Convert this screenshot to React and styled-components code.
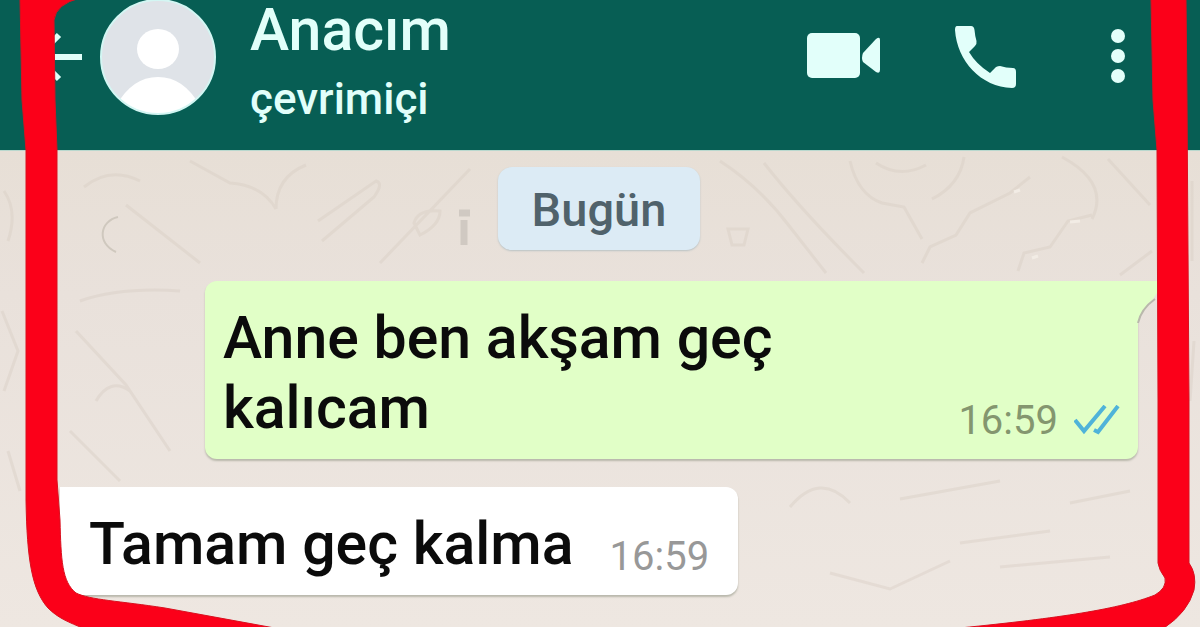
import React from "react";
import styled, { createGlobalStyle } from "styled-components";

const GlobalStyle = createGlobalStyle`
  * { box-sizing: border-box; }
  body {
    margin: 0;
    font-family: Roboto, "Liberation Sans", sans-serif;
    font-weight: 500;
  }
`;

const Screen = styled.div`
  position: relative;
  display: flex;
  flex-direction: column;
  min-height: 100vh;
`;

const Header = styled.header`
  display: flex;
  align-items: flex-start;
  min-height: 150px;
  padding: 0 74px 0 36px;
  background: #075e54;
  color: #e2fffa;
`;

const IconButton = styled.button`
  display: flex;
  align-items: center;
  justify-content: flex-end;
  flex: none;
  width: ${(p) => p.$width}px;
  height: 114px;
  padding: 0;
  border: 0;
  background: none;
  color: inherit;
  cursor: pointer;

  svg { display: block; flex: none; }
`;

const Avatar = styled.svg`
  display: block;
  flex: none;
  width: 116px;
  height: 116px;
  margin-left: 18px;
`;

const Contact = styled.div`
  display: flex;
  flex-direction: column;
  gap: 12px;
  flex: 1;
  min-width: 0;
  margin-left: 34px;
`;

const Name = styled.h1`
  margin: 0;
  font-size: 59px;
  font-weight: 500;
  line-height: 60px;
`;

const Status = styled.p`
  margin: 0;
  font-size: 44px;
  line-height: 54px;
`;

const Actions = styled.div`
  display: flex;
  gap: 74px;
`;

const Chat = styled.main`
  position: relative;
  display: flex;
  flex: 1;
  flex-direction: column;
  padding: 16px 62px 32px 60px;
  border-top: 1px solid #b9d8ce;
  background: linear-gradient(#e7dfd6, #e9e1db 30%, #eee7e1);
`;

const Wallpaper = styled.svg`
  position: absolute;
  inset: 0;
  width: 100%;
  height: 100%;
`;

const DateChip = styled.time`
  position: relative;
  align-self: center;
  padding: 14px 34px 11px;
  border-radius: 14px;
  background: #dcebf5;
  box-shadow: 0 1px 2px #b9c2c4;
  color: #50626b;
  font-size: 47px;
  line-height: 58px;
`;

const Bubble = styled.article`
  position: relative;
  display: flex;
  align-items: flex-end;
  align-self: ${(p) => (p.$sent ? "stretch" : "flex-start")};
  gap: 36px;
  margin: ${(p) => (p.$sent ? "31px 0 0 145px" : "28px 0 0")};
  padding: ${(p) => (p.$sent ? "22px 18px 16px" : "22px 29px 16px")};
  border-radius: ${(p) => (p.$sent ? "12px 0 12px 12px" : "0 12px 12px 12px")};
  background: ${(p) => (p.$sent ? "#e1ffc7" : "#ffffff")};
  box-shadow: 0 2px 2px #b9b8ac;
`;

const Tail = styled.svg`
  position: absolute;
  top: 0;
  left: 100%;
  width: 28px;
  height: 42px;
  margin-left: -1px;
`;

const Message = styled.p`
  flex: 1;
  margin: 0;
  color: #0b0b0b;
  font-size: 59px;
  line-height: 70px;
`;

const Meta = styled.div`
  display: flex;
  align-items: center;
  gap: 16px;
  padding-bottom: 2px;
  color: ${(p) => (p.$sent ? "#84966f" : "#989898")};
  font-size: 40px;
  font-weight: 400;
  line-height: 40px;
`;

const Marker = styled.svg`
  position: absolute;
  inset: 0;
  width: 100%;
  height: 100%;
  pointer-events: none;
`;

const BackIcon = () => (
  <svg width="46" height="52" viewBox="0 0 46 52" fill="none" stroke="currentColor" strokeWidth="6" aria-hidden="true">
    <path d="M4 26H46M23 4L1 26L23 48" />
  </svg>
);

const VideoIcon = () => (
  <svg width="74" height="48" viewBox="0 0 74 48" fill="currentColor" aria-hidden="true">
    <rect x="1" y="0" width="53" height="45" rx="5" />
    <path d="M57 20L70 6Q74 3 74 7V37Q74 41 70 39L57 29Q55 25 57 20Z" />
  </svg>
);

const PhoneIcon = () => (
  <svg width="62" height="62" viewBox="0 0 62 62" fill="currentColor" aria-hidden="true">
    <path d="M3 0H17Q20 0 20.500 4Q21 10 22.500 15Q23 18 21 20L15 26Q22 38 36 47L42 41Q44 40 46 40Q52 42 59 42Q62 42 62 46V58Q62 62 58 62C27 61 3 35 1 4Q1 0 3 0Z" />
  </svg>
);

const MoreIcon = () => (
  <svg width="16" height="56" viewBox="0 0 16 56" fill="currentColor" aria-hidden="true">
    <circle cx="8" cy="7" r="7" />
    <circle cx="8" cy="27" r="7" />
    <circle cx="8" cy="47" r="7" />
  </svg>
);

const ReadIcon = () => (
  <svg width="46" height="32" viewBox="0 0 46 32" fill="none" stroke="#4fb3d9" strokeWidth="4" role="img" aria-label="Okundu">
    <path d="M1 15L10 26L31 1M20 25L24 27L44 1" />
  </svg>
);

function Doodles() {
  return (
    <Wallpaper viewBox="0 150 1200 477" preserveAspectRatio="xMidYMin slice" fill="none" strokeWidth="3" aria-hidden="true">
      <g stroke="#d9cfc5" opacity="0.45">
        <path d="M84 186Q110 165 140 180M190 160L230 182Q262 184 276 208M276 208Q276 176 306 164M318 220L376 180Q384 182 374 196L322 240" />
        <path d="M414 222Q418 208 440 210Q440 224 420 234ZM380 262L470 168M126 204L200 262" />
        <path d="M720 160Q760 186 790 226L826 272M764 162Q800 208 864 272" />
        <path d="M850 160Q858 194 882 202L904 206L922 238M964 156Q960 184 932 198M876 162Q900 178 926 164" />
        <path d="M922 262L930 246L956 234L970 212L1010 192L1030 176M1018 270L1024 252L1050 246L1068 220L1092 214M1062 156Q1110 182 1092 218" />
        <path d="M728 228H748L744 244H732ZM1108 158L1150 204M1120 274L1152 250" />
        <path d="M80 300Q120 286 180 290M76 330L126 384L170 450M96 400Q110 376 130 390M70 430L120 480" />
        <path d="M790 506Q820 470 850 502M900 498L1000 480M960 542L1050 530M1070 502L1130 490M830 572L890 588L950 560M1000 566L1110 556" />
        <path d="M4 190Q18 210 8 240M2 310L18 350L4 390M8 450L20 490M1192 180V260M1194 340L1190 400" />
      </g>
      <g stroke="#f2ece5">
        <path d="M1014 191L1020 189M1070 221L1080 220M1032 257L1038 255" />
      </g>
      <path d="M118 216C100 220 96 242 116 251" stroke="#cfc8be" strokeWidth="2" />
      <path d="M459 212H470M464 219V244" stroke="#d0c9c2" strokeWidth="7" />
    </Wallpaper>
  );
}

export default function App() {
  return (
    <>
      <GlobalStyle />
      <Screen>
        <Header>
          <IconButton $width={46} aria-label="Geri">
            <BackIcon />
          </IconButton>
          <Avatar viewBox="0 0 116 116" aria-hidden="true">
            <clipPath id="face"><circle cx="58" cy="57" r="57" /></clipPath>
            <g clipPath="url(#face)">
              <circle cx="58" cy="57" r="58" fill="#dfe3e8" />
              <ellipse cx="58" cy="49" rx="21" ry="20" fill="#fff" />
              <path d="M16 106Q32 77 58 77Q84 77 100 106V120H16Z" fill="#fff" />
            </g>
            <circle cx="58" cy="57" r="57" fill="none" stroke="#d3f6f3" strokeWidth="2" />
          </Avatar>
          <Contact>
            <Name>Anacım</Name>
            <Status>çevrimiçi</Status>
          </Contact>
          <Actions>
            <IconButton $width={74} aria-label="Görüntülü arama">
              <VideoIcon />
            </IconButton>
            <IconButton $width={62} aria-label="Sesli arama">
              <PhoneIcon />
            </IconButton>
            <IconButton $width={36} aria-label="Menü">
              <MoreIcon />
            </IconButton>
          </Actions>
        </Header>
        <Chat>
          <Doodles />
          <DateChip>Bugün</DateChip>
          <Bubble $sent>
            <Message>Anne ben akşam geç kalıcam</Message>
            <Meta $sent>
              <time>16:59</time>
              <ReadIcon />
            </Meta>
            <Tail viewBox="0 0 28 42" aria-hidden="true">
              <path d="M0 0H28L16 18Q4 28 1 42H0Z" fill="#e1ffc7" />
              <path d="M18 18Q4 28 1 42" fill="none" stroke="#b9b8ac" strokeWidth="2" />
            </Tail>
          </Bubble>
          <Bubble>
            <Message>Tamam geç kalma</Message>
            <Meta>
              <time>16:59</time>
            </Meta>
          </Bubble>
        </Chat>
        <Marker viewBox="0 0 1200 627" preserveAspectRatio="none" aria-hidden="true">
          <g fill="#fb0019" stroke="#d9101f">
            <path d="M20 -2L22 100L26 150V500C27 560 32 590 48 608C58 618 68 622 85 629H280L165 608C120 601 90 600 76 593C62 582 61 560 60 520L57 480V150L55 100L54 20Q56 4 80 -2Z" />
            <path d="M1151 -2L1153 100L1157 150L1158 400V563Q1159 570 1165 578Q1167 588 1155 595C1120 609 1060 618 960 628H1164Q1188 612 1194 590Q1197 574 1189 563V400L1187 100L1186 -2Z" />
          </g>
        </Marker>
      </Screen>
    </>
  );
}
